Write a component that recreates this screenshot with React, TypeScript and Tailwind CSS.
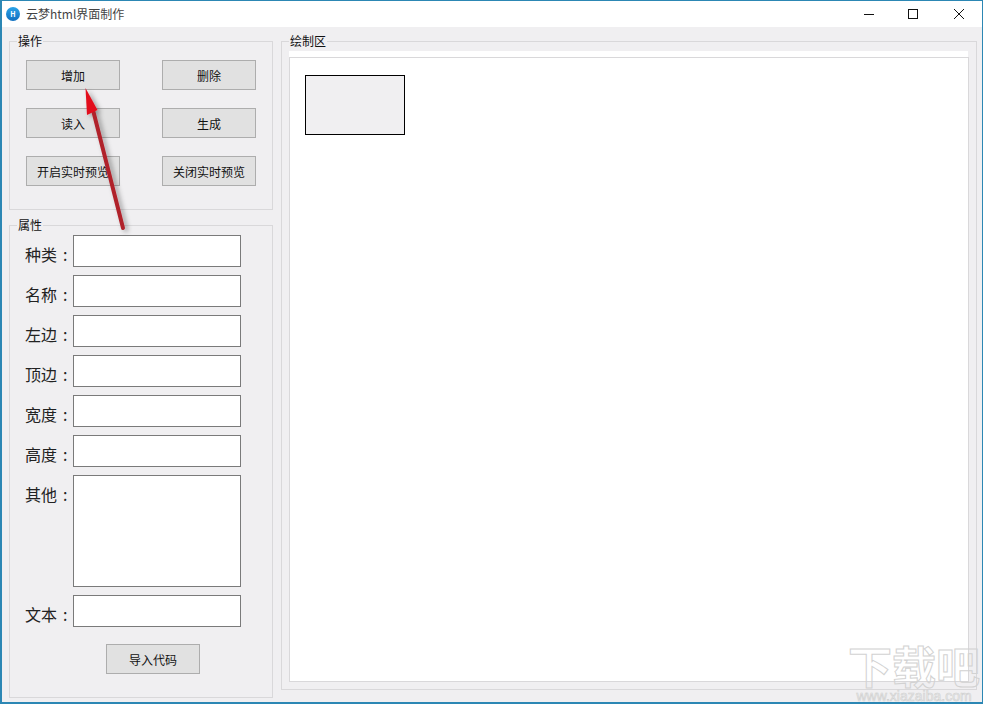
const font = { fontFamily: '"Noto Sans CJK SC", "Liberation Sans", sans-serif' };

function Btn({ text, className }: { text: string; className?: string }) {
  return (
    <button
      className={`flex h-[30px] w-[94px] items-center justify-center border border-[#adadad] bg-[#e1e1e1] pt-[1px] text-[12px] text-[#111] ${className ?? ""}`}
    >
      {text}
    </button>
  );
}

function Field({ label, tall }: { label: string; tall?: boolean }) {
  return (
    <div className="flex items-start">
      <span className="h-8 w-[63px] whitespace-pre pl-[15px] text-[16px] leading-[38px] text-[#222]">
        {label}
        <span className="ml-[6px]">:</span>
      </span>
      <div className={`w-[168px] border border-[#7a7a7a] bg-white ${tall ? "h-28" : "h-8"}`} />
    </div>
  );
}

function Logo() {
  return (
    <div className="flex h-[14px] w-[14px] items-center justify-center rounded-full bg-gradient-to-b from-[#2aa3e8] to-[#0f6fc0] text-[7px] font-bold text-white">
      H
    </div>
  );
}

function Legend({ text }: { text: string }) {
  return <legend className="ml-[7px] px-[1px] text-[12px] leading-[14px] text-[#111]">{text}</legend>;
}

export default function App() {
  return (
    <div
      style={font}
      className="relative flex h-[704px] w-[983px] flex-col overflow-hidden border border-b-2 border-[#2c87b4] border-l-2 bg-[#f0eff1]"
    >
      {/* 标题栏 */}
      <div className="flex h-[26px] shrink-0 items-center bg-white">
        <div className="ml-[4px]"><Logo /></div>
        <span className="ml-[6px] text-[12px] text-[#444]">云梦html界面制作</span>
        <div className="ml-auto flex items-center">
          <svg width="12" height="12" viewBox="0 0 12 12" className="mr-[32px]">
            <path d="M1 6.5h10" stroke="#111" strokeWidth="1" />
          </svg>
          <svg width="12" height="12" viewBox="0 0 12 12" className="mr-[34px]">
            <rect x="1.5" y="1.5" width="9" height="9" fill="none" stroke="#111" strokeWidth="1" />
          </svg>
          <svg width="12" height="12" viewBox="0 0 12 12" className="mr-[17px]">
            <path d="M1 1l10 10M11 1L1 11" stroke="#111" strokeWidth="1" />
          </svg>
        </div>
      </div>

      <div className="flex flex-1 items-start gap-[8px] pl-[7px] pt-[7px]">
        <div className="flex w-[264px] flex-col gap-[8px]">
          <fieldset className="h-[176px] border border-[#d9d8da]">
            <Legend text="操作" />
            <div className="grid grid-cols-[94px_94px] gap-x-[42px] gap-y-[18px] pl-[16px] pt-[12px]">
              <Btn text="增加" />
              <Btn text="删除" />
              <Btn text="读入" />
              <Btn text="生成" />
              <Btn text="开启实时预览" />
              <Btn text="关闭实时预览" />
            </div>
          </fieldset>
          <fieldset className="h-[480px] border border-[#d9d8da]">
            <Legend text="属性" />
            <div className="flex flex-col gap-2 pl-0 pt-[3px]">
              <Field label="种类" />
              <Field label="名称" />
              <Field label="左边" />
              <Field label="顶边" />
              <Field label="宽度" />
              <Field label="高度" />
              <Field label="其他" tall />
              <Field label="文本" />
            </div>
            <Btn text="导入代码" className="ml-[96px] mt-[17px]" />
          </fieldset>
        </div>

        <fieldset className="h-[656px] w-[696px] border border-[#d9d8da]">
          <Legend text="绘制区" />
          <div className="ml-[7px] mt-[3px] h-[6px] w-[679px] bg-white" />
          <div className="ml-[7px] h-[625px] w-[680px] border border-[#d9d8da] bg-white pl-[15px] pt-[17px]">
            <div className="h-[60px] w-[100px] border border-black bg-[#f0eff1]" />
          </div>
        </fieldset>
      </div>

      {/* 截图上的红色箭头 */}
      <svg className="absolute left-[-2px] top-[-1px]" width="983" height="704" viewBox="0 0 983 704">
        <defs>
          <filter id="s" x="-50%" y="-20%" width="200%" height="140%">
            <feDropShadow dx="3" dy="2" stdDeviation="2.5" floodColor="#000" floodOpacity="0.35" />
          </filter>
        </defs>
        <g filter="url(#s)">
          <path d="M123 228L93 110" stroke="#b0222c" strokeWidth="4" strokeLinecap="round" />
          <path d="M85.5 88L97.5 110L87 115Z" fill="#e2101c" />
        </g>
      </svg>

      {/* 水印 */}
      <div className="absolute bottom-[-1px] right-[1px] flex w-[134px] flex-col items-center text-transparent">
        <span className="mb-[4px] text-[44px] font-bold leading-[40px] [-webkit-text-stroke:1px_#d2d2d2]">下载吧</span>
        <span className="text-[14px] leading-[14px] [-webkit-text-stroke:0.6px_#cfcfcf]" style={{ fontFamily: '"Liberation Sans", sans-serif' }}>
          www.xiazaiba.com
        </span>
      </div>
    </div>
  );
}
